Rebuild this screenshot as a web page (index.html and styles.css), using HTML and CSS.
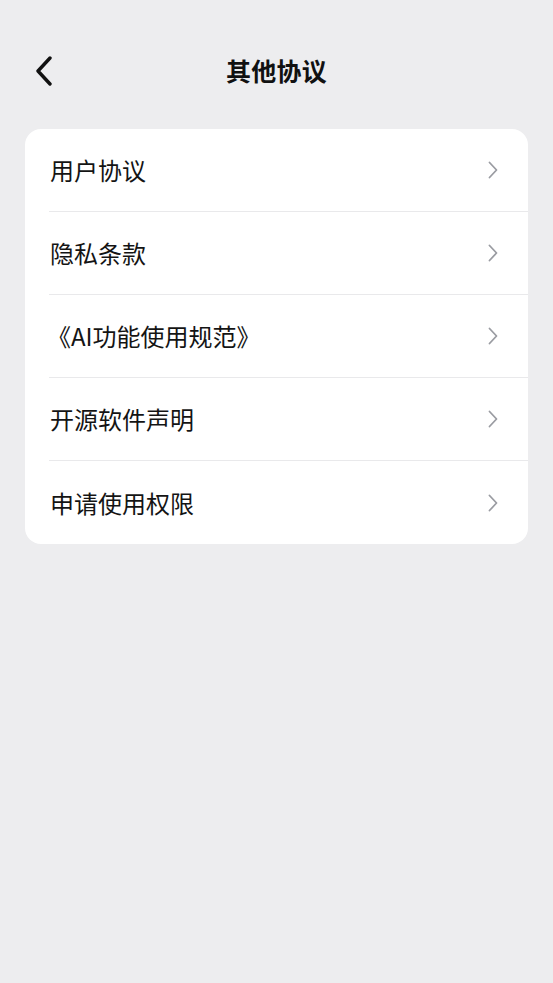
FILE: index.html
```html
<!DOCTYPE html>
<html lang="zh">
<head>
<meta charset="utf-8">
<link rel="stylesheet" href="styles.css">
</head>
<body>
<div class="page">
  <header class="nav">
    <span class="back">
      <svg width="20" height="30" viewBox="0 0 20 30"><path d="M16 2 L4 15 L16 28" fill="none" stroke="#111" stroke-width="3.4" stroke-linecap="round" stroke-linejoin="round"/></svg>
    </span>
    <h1 class="title">其他协议</h1>
    <span class="spacer"></span>
  </header>
  <ul class="card">
    <li class="row"><span class="label">用户协议</span><svg class="chev" width="10" height="18" viewBox="0 0 10 18"><path d="M1.5 1.5 L8.5 9 L1.5 16.5" fill="none" stroke="#9a9ca2" stroke-width="1.8" stroke-linecap="round" stroke-linejoin="round"/></svg></li>
    <li class="row"><span class="label">隐私条款</span><svg class="chev" width="10" height="18" viewBox="0 0 10 18"><path d="M1.5 1.5 L8.5 9 L1.5 16.5" fill="none" stroke="#9a9ca2" stroke-width="1.8" stroke-linecap="round" stroke-linejoin="round"/></svg></li>
    <li class="row"><span class="label label-ai">《AI功能使用规范》</span><svg class="chev" width="10" height="18" viewBox="0 0 10 18"><path d="M1.5 1.5 L8.5 9 L1.5 16.5" fill="none" stroke="#9a9ca2" stroke-width="1.8" stroke-linecap="round" stroke-linejoin="round"/></svg></li>
    <li class="row"><span class="label">开源软件声明</span><svg class="chev" width="10" height="18" viewBox="0 0 10 18"><path d="M1.5 1.5 L8.5 9 L1.5 16.5" fill="none" stroke="#9a9ca2" stroke-width="1.8" stroke-linecap="round" stroke-linejoin="round"/></svg></li>
    <li class="row"><span class="label">申请使用权限</span><svg class="chev" width="10" height="18" viewBox="0 0 10 18"><path d="M1.5 1.5 L8.5 9 L1.5 16.5" fill="none" stroke="#9a9ca2" stroke-width="1.8" stroke-linecap="round" stroke-linejoin="round"/></svg></li>
  </ul>
</div>
</body>
</html>
```
FILE: styles.css
```css
* { box-sizing: border-box; }
html, body {
  margin: 0;
  padding: 0;
  background: #ededef;
  font-family: "Noto Sans CJK SC", "Noto Sans", sans-serif;
  color: #111;
}
.page {
  width: 553px;
  min-height: 983px;
  padding: 0 25px;
}
.nav {
  height: 129px;
  padding-top: 55px;
  display: grid;
  grid-template-columns: 1fr auto 1fr;
  align-items: start;
}
.back {
  margin-left: 9px;
  width: 20px;
  height: 30px;
  display: flex;
  margin-top: 1px;
}
.title {
  margin: 0;
  font-size: 25px;
  font-weight: 700;
  line-height: 30px;
  letter-spacing: 0.3px;
}
.card {
  list-style: none;
  margin: 0;
  padding: 0 0 0 24px;
  background: #fff;
  border-radius: 16px;
  overflow: hidden;
}
.row {
  height: 83px;
  display: flex;
  align-items: center;
  justify-content: space-between;
  padding-right: 30px;
  border-bottom: 1px solid #e9e9eb;
}
.row:last-child { border-bottom: none; }
.label {
  font-size: 24px;
  line-height: 30px;
  color: #141414;
  padding-left: 1px;
}
.label-ai { margin-left: -3px; }
.chev { display: block; }
```
